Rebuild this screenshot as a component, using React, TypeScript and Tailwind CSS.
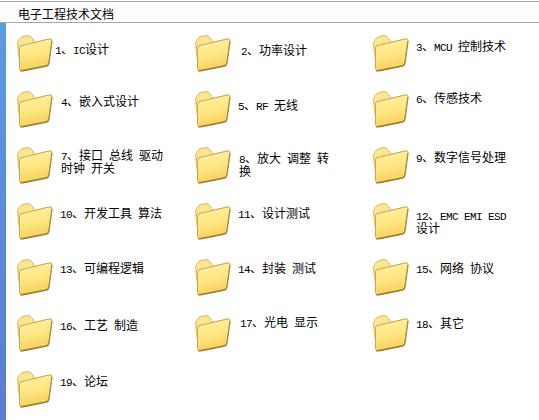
const items: [string, number, number][] = [
  ["1、IC设计", 1, 7],
  ["2、功率设计", 9, 8],
  ["3、MCU 控制技术", 6, 4],
  ["4、嵌入式设计", 7, 3],
  ["5、RF 无线", 6, 7],
  ["6、传感技术", 6, 0],
  ["7、接口 总线 驱动\n时钟 开关", 7, 1],
  ["8、放大 调整 转\n换", 7, 4],
  ["9、数字信号处理", 6, 3],
  ["10、开发工具 算法", 6, 3],
  ["11、设计测试", 6, 3],
  ["12、EMC EMI ESD\n设计", 6, 5],
  ["13、可编程逻辑", 6, 2],
  ["14、封装 测试", 6, 2],
  ["15、网络 协议", 6, 2],
  ["16、工艺 制造", 6, 3],
  ["17、光电 显示", 8, 0],
  ["18、其它", 6, 1],
  ["19、论坛", 6, 3],
];

function Label({ text }: { text: string }) {
  const runs = text.match(/[\x21-\x7e \n]+|[^\x21-\x7e \n]+/g) ?? [];
  return (
    <div className="whitespace-pre-line">
      {runs.map((run, i) =>
        /[\x21-\x7e]|^[ \n]+$/.test(run) ? (
          <span key={i} className="font-['Liberation_Mono',monospace] text-[11px] leading-[8px] tracking-[-0.6px]">
            {run}
          </span>
        ) : (
          <span key={i} className="leading-[8px]">{run}</span>
        ),
      )}
    </div>
  );
}

function Folder() {
  return (
    <svg width="38" height="38" viewBox="0 0 38 38" className="shrink-0">
      <defs>
        <linearGradient id="front" x1="0.1" y1="0" x2="0.3" y2="1">
          <stop offset="0" stopColor="#fff3a8" />
          <stop offset="0.55" stopColor="#fde580" />
          <stop offset="1" stopColor="#f8d05c" />
        </linearGradient>
      </defs>
      <path d="M1.500 10 Q2 3 7 1.500 Q11 0 14 1 Q17 3 19 7.500 L33 4 L33 12 L4 30 Z" fill="#f9e592" stroke="#d9bb6a" strokeWidth="1" />
      <path d="M3.500 13 Q3 11 6 10.500 L33 4 Q36.500 3 36 6 L32.500 29 Q32 31 29 31.500 L7 36 Q3.500 36.500 3.500 33 Z" fill="url(#front)" stroke="#c9a850" strokeWidth="1" />
      <path d="M4.500 36 L30 31 Q32.500 30.500 33 28" fill="none" stroke="#9c7e30" strokeWidth="1.300" />
      <path d="M36 6 L33 28" fill="none" stroke="#a88a3c" strokeWidth="1.200" />
    </svg>
  );
}

export default function App() {
  return (
    <div className="w-[539px] h-[420px] overflow-hidden bg-white flex flex-col font-['Noto_Sans_CJK_SC',sans-serif] text-[12px] leading-[13px] text-black">
      <div className="h-[22px] mt-[1px] border-y border-[#a8a8a8] bg-[#fdfdfd] pl-[18px] pt-[5px] shrink-0">
        电子工程技术文档
      </div>
      <div className="flex flex-1">
        <div className="w-[6px] bg-linear-to-b from-[#5c9ae2] to-[#5a7bd2]" />
        <div className="grid grid-cols-[178px_178px_1fr] auto-rows-[56px] pl-[10px] pt-[12px]">
          {items.map(([label, x, y]) => (
            <div key={label} className="flex items-start">
              <Folder />
              <div style={{ marginLeft: x, marginTop: y }}>
                <Label text={label} />
              </div>
            </div>
          ))}
        </div>
      </div>
    </div>
  );
}
